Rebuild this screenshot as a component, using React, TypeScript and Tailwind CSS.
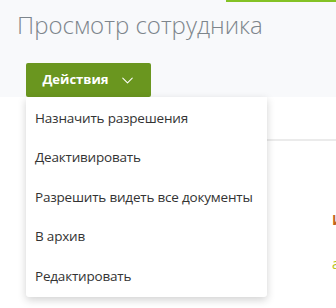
import { ChevronDown } from 'lucide-react'

const items = [
  'Назначить разрешения',
  'Деактивировать',
  'Разрешить видеть все документы',
  'В архив',
  'Редактировать'
]

export default function App(): React.JSX.Element {
  return (
    <div className="relative h-[308px] w-[336px] overflow-hidden bg-white font-['Open_Sans',sans-serif]">
      <div className="relative h-[97px] bg-[#f8f9fb]">
        <div className="absolute right-0 top-0 h-[2px] w-[110px] bg-[#84c225]" />
        <h1 className="pl-[17px] pt-[9px] text-[24px] font-light leading-[32px] text-[#7d858c]">
          Просмотр сотрудника
        </h1>
        <div className="pl-[26px] pt-[22px]">
          <button className="flex h-[34px] w-[125px] items-center justify-center gap-[9px] rounded-[2px] bg-[#6a961f] pl-[2px] text-[13px] font-bold text-white">
            Действия
            <ChevronDown size={19} strokeWidth={1.3} />
          </button>
        </div>
      </div>
      <div className="mt-[42px] ml-[200px] h-[2px] bg-[#ebebeb]" />
      <div className="ml-[332px] mt-[72px] whitespace-nowrap text-[14px] font-bold leading-none text-[#c0641a]">Имя</div>
      <div className="ml-[332px] mt-[30px] whitespace-nowrap text-[14px] leading-none text-[#b7c21a]">активен</div>

      <div className="absolute left-[26px] top-[97px] w-[241px] rounded-b-[3px] bg-white py-[1px] shadow-[0_3px_8px_rgba(0,0,0,0.18)]">
        {items.map((label) => (
          <div
            key={label}
            className="flex h-[39.6px] items-center whitespace-nowrap px-[9px] text-[13.5px] tracking-[-0.2px] text-[#333]"
          >
            {label}
          </div>
        ))}
      </div>
    </div>
  )
}
